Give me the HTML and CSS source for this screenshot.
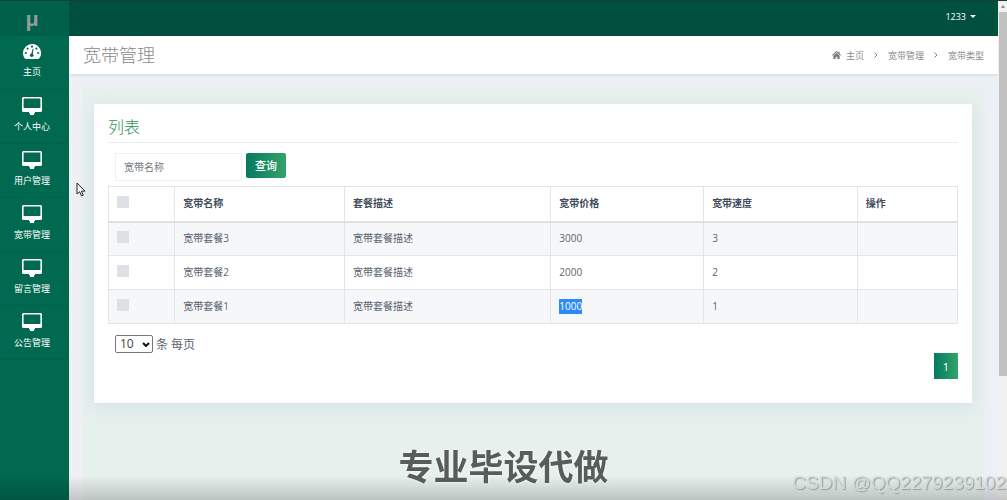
FILE: index.html
```
<!DOCTYPE html>
<html lang="zh-CN">
<head>
<meta charset="utf-8">
<title>宽带管理</title>
<link rel="stylesheet" href="styles.css">
</head>
<body>
<svg class="sprite" aria-hidden="true">
  <symbol id="monitor" viewBox="0 0 20 18"><path fill-rule="evenodd" d="M1.500 0h17A1.500 1.500 0 0 1 20 1.500v12a1.500 1.500 0 0 1-1.500 1.500H13v1.200h-1V18H8v-1.800H7V15H1.500A1.500 1.500 0 0 1 0 13.500v-12A1.500 1.500 0 0 1 1.500 0zM1.600 1.600v9.400h16.800V1.600z"/></symbol>
</svg>
<div class="app">
  <nav class="sidebar">
    <a class="brand" href="#">μ</a>
    <a class="nav-item" href="#">
      <svg class="gauge" viewBox="0 0 18 15"><path d="M9 0a9 9 0 0 0-9 9c0 2 .6 3.800 1.700 5.300.3.500.7.700 1.200.7h12.200c.5 0 .9-.2 1.200-.7A9 9 0 0 0 9 0z"/><g class="gauge-mark"><circle cx="9" cy="2.700" r="1.100"/><circle cx="4.600" cy="4.600" r="1.100"/><circle cx="2.800" cy="9" r="1.100"/><circle cx="13.400" cy="4.600" r="1.100"/><circle cx="15.200" cy="9" r="1.100"/><circle cx="8.700" cy="11.200" r="1.800"/><path d="M8 11l1.700-6.200.9.200-1 6.300z"/></g></svg>
      <span>主页</span>
    </a>
    <a class="nav-item" href="#"><svg class="monitor"><use href="#monitor"/></svg><span>个人中心</span></a>
    <a class="nav-item" href="#"><svg class="monitor"><use href="#monitor"/></svg><span>用户管理</span></a>
    <a class="nav-item" href="#"><svg class="monitor"><use href="#monitor"/></svg><span>宽带管理</span></a>
    <a class="nav-item" href="#"><svg class="monitor"><use href="#monitor"/></svg><span>留言管理</span></a>
    <a class="nav-item" href="#"><svg class="monitor"><use href="#monitor"/></svg><span>公告管理</span></a>
  </nav>
  <div class="main">
    <header class="topbar"><button class="user" type="button">1233<span class="caret"></span></button></header>
    <div class="page-head">
      <h1>宽带管理</h1>
      <nav class="crumbs">
        <a class="crumb" href="#"><svg class="home" viewBox="0 0 16 14"><path d="M8 0L0 7l1 1.200 7-6 7 6L16 7l-2.500-2.200V1h-2v2z"/><path d="M8 3.500L2.500 8.200V14h4v-4h3v4h4V8.200z"/></svg>主页</a>
        <svg class="sep" viewBox="0 0 4 6"><path d="M.5.5L3 3 .5 5.500"/></svg>
        <a class="crumb" href="#">宽带管理</a>
        <svg class="sep" viewBox="0 0 4 6"><path d="M.5.5L3 3 .5 5.500"/></svg>
        <span class="crumb">宽带类型</span>
      </nav>
    </div>
    <main class="content">
      <section class="card">
        <h2>列表</h2>
        <form class="search">
          <input class="search-input" type="text" placeholder="宽带名称" aria-label="宽带名称">
          <button class="search-button" type="button">查询</button>
        </form>
        <table class="grid">
          <colgroup><col class="c-check"><col class="c-name"><col class="c-desc"><col class="c-price"><col class="c-speed"><col></colgroup>
          <thead><tr><th><input type="checkbox" aria-label="全选"></th><th>宽带名称</th><th>套餐描述</th><th>宽带价格</th><th>宽带速度</th><th>操作</th></tr></thead>
          <tbody>
            <tr><td><input type="checkbox" aria-label="宽带套餐3"></td><td>宽带套餐3</td><td>宽带套餐描述</td><td>3000</td><td>3</td><td></td></tr>
            <tr><td><input type="checkbox" aria-label="宽带套餐2"></td><td>宽带套餐2</td><td>宽带套餐描述</td><td>2000</td><td>2</td><td></td></tr>
            <tr><td><input type="checkbox" aria-label="宽带套餐1"></td><td>宽带套餐1</td><td>宽带套餐描述</td><td><span class="selected">1000</span></td><td>1</td><td></td></tr>
          </tbody>
        </table>
        <div class="page-size">
          <span class="select-wrap"><select id="size"><option>10</option></select><svg class="chevron" viewBox="0 0 8 5"><path d="M1 1l3 3 3-3"/></svg></span>
          <label for="size">条 每页</label>
        </div>
        <div class="pager"><button class="page" type="button">1</button></div>
      </section>
    </main>
  </div>
  <div class="scrollbar"><span class="arrow"></span><span class="thumb"></span></div>
</div>
<div class="shade"></div>
<p class="caption">专业毕设代做</p>
<p class="watermark">CSDN @QQ2279239102</p>
<svg class="pointer" viewBox="0 0 10 15"><path d="M1 1v11l2.600-2.300L5.500 14l1.800-.8-1.900-4.100H9z"/></svg>
</body>
</html>
```
FILE: styles.css
```
* { box-sizing: border-box; }
body {
  margin: 0;
  overflow: hidden;
  font: 10px/15px "Open Sans", "Noto Sans CJK SC", sans-serif;
  color: #5c6470;
  background: #edf0f4;
}
a { color: inherit; text-decoration: none; }
button, input, select { font: inherit; margin: 0; }
svg { display: block; }
.sprite { position: absolute; width: 0; height: 0; }
.app { display: flex; height: 100vh; border-top: 1px solid #163f37; }

.sidebar { flex: none; width: 69px; background: #00694f; color: #fff; }
.brand {
  display: flex;
  align-items: center;
  justify-content: center;
  height: 35px;
  padding-right: 5px;
  background: #00614a;
  color: #929e99;
  font-size: 20px;
  font-weight: 700;
}
.nav-item {
  display: flex;
  flex-direction: column;
  align-items: center;
  gap: 5px;
  height: 54px;
  padding: 7px 5px 0 0;
  border-bottom: 1px solid #00644c;
  font-size: 9px;
  line-height: 14px;
}
.monitor { width: 20px; height: 18px; fill: #fff; }
.gauge { width: 18px; height: 15px; margin: 1px 0; fill: #fff; }
.gauge-mark { fill: #00694f; }

.main { flex: 1; min-width: 0; display: flex; flex-direction: column; }
.topbar {
  flex: none;
  display: flex;
  justify-content: flex-end;
  align-items: center;
  height: 35px;
  padding: 0 22px 4px;
  background: #004f3f;
}
.user {
  display: flex;
  align-items: center;
  gap: 4px;
  padding: 0;
  border: 0;
  background: none;
  color: #fff;
  font-size: 9px;
  font-weight: 500;
}
.caret { border: 3px solid transparent; border-top-color: #fff; border-bottom: 0; }
.page-head {
  flex: none;
  display: flex;
  align-items: center;
  justify-content: space-between;
  height: 39px;
  padding: 0 14px;
  background: #fff;
  border-bottom: 1px solid #dfe2e6;
  box-shadow: 0 1px 2px #dfe2e6;
  clip-path: inset(0 0 -4px);
}
h1, h2 { margin: 0; font-weight: 300; }
h1 { font-size: 18px; line-height: 24px; color: #8a8a8a; }
.crumbs { display: flex; align-items: center; gap: 10px; font-size: 9px; color: #8a8a8a; }
.crumb { display: flex; align-items: center; gap: 5px; }
.home { width: 9px; height: 8px; fill: #777; }
.sep { width: 4px; height: 6px; fill: none; stroke: #888; }

.content {
  flex: 1;
  margin: 13px 14px 0;
  padding: 16px 12px 16px 11px;
  background: #e6f0ed;
}
.card {
  padding: 12px 14px 24px;
  background: #fff;
  box-shadow: 0 4px 16px #d5dfe8;
}
h2 {
  padding-bottom: 4px;
  border-bottom: 1px solid #ececec;
  font-size: 16px;
  line-height: 22px;
  color: #2a9457;
}
.search { display: flex; gap: 4px; padding: 10px 7px 5px; }
.search-input {
  width: 127px;
  height: 28px;
  padding: 0 8px;
  border: 1px solid #eef0f3;
  background: #fff;
}
.search-input::placeholder { color: #777c82; }
.search-button, .page {
  border: 0;
  background: linear-gradient(90deg, #057a60, #33a36a);
  color: #fff;
}
.search-button {
  width: 40px;
  height: 25px;
  padding: 0;
  border-radius: 2px;
  font-size: 11px;
  font-weight: 500;
}

.grid { width: 100%; table-layout: fixed; border-collapse: collapse; }
.c-check { width: 7.8%; }
.c-name { width: 20%; }
.c-desc { width: 24.3%; }
.c-price { width: 18%; }
.c-speed { width: 18.1%; }
.grid th, .grid td {
  height: 34px;
  padding: 0 8px;
  border: 1px solid #e1e4e8;
  text-align: left;
}
.grid th { height: 35px; border-bottom: 2px solid #dcdfe3; color: #414c5c; font-weight: 700; }
.grid tbody tr:nth-child(odd) { background: #f6f7f9; }
.grid input {
  display: block;
  appearance: none;
  width: 12px;
  height: 12px;
  margin-bottom: 3px;
  background: #dde0e4;
}
.selected { display: inline-block; background: #2a8cf4; color: #fff; }

.page-size {
  display: flex;
  align-items: center;
  gap: 3px;
  padding: 11px 7px 0;
  font-size: 12px;
}
.select-wrap { position: relative; }
.page-size select {
  display: block;
  appearance: none;
  width: 38px;
  height: 18px;
  padding: 0 4px;
  border: 1px solid #777;
  border-radius: 2px;
  background: #fff;
  color: #444;
  line-height: 16px;
}
.chevron {
  position: absolute;
  right: 3px;
  top: 7px;
  width: 8px;
  height: 5px;
  fill: none;
  stroke: #111;
  stroke-width: 2;
  pointer-events: none;
}
.pager { display: flex; justify-content: flex-end; }
.page { width: 24px; height: 26px; padding: 0; font-size: 11px; font-weight: 500; }

.scrollbar {
  flex: none;
  display: flex;
  flex-direction: column;
  align-items: center;
  width: 9px;
  background: #f1f1f1;
}
.arrow { margin: 4px 0; border: 2px solid transparent; border-bottom: 3px solid #888; border-top: 0; }
.thumb { width: 8px; height: 73%; background: #c1c1c1; }

.shade {
  position: fixed;
  inset: auto 0 0;
  height: 24px;
  background: linear-gradient(transparent, rgba(0, 0, 0, .18));
  pointer-events: none;
}
.caption {
  position: fixed;
  inset: auto 0 11px;
  margin: 0;
  text-align: center;
  font: 700 35px/48px "Noto Sans CJK SC", sans-serif;
  color: #585c5a;
  text-shadow: 0 0 3px #fff;
  pointer-events: none;
}
.watermark {
  position: fixed;
  right: 1px;
  bottom: 5px;
  margin: 0;
  font: 19px/24px "Liberation Sans", sans-serif;
  color: #d3dad8;
  text-shadow: 1px 1px 1px #959c99;
  pointer-events: none;
}
.pointer {
  position: fixed;
  left: 76px;
  top: 182px;
  width: 10px;
  height: 15px;
  fill: #fff;
  stroke: #222;
  pointer-events: none;
}
```
